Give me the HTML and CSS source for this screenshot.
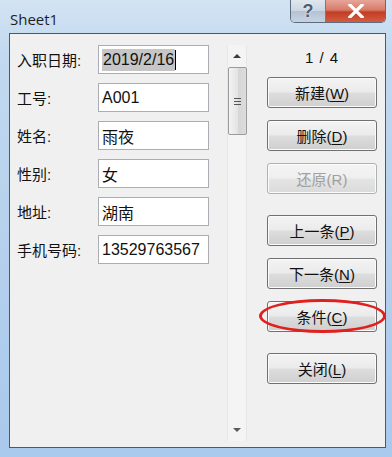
FILE: index.html
```html
<!DOCTYPE html>
<html lang="zh-CN">
<head>
    <meta charset="UTF-8">
    <title>Sheet1</title>
    <link rel="stylesheet" href="styles.css">
</head>
<body>
    <div class="window">
        <div class="titlebar">
            <div class="title">Sheet1</div>
            <div class="caption-btns">
                <div class="cap-btn cap-help">?</div>
                <div class="cap-btn cap-close">
                    <svg width="18" height="14" viewBox="0 0 18 14">
                        <path d="M3 1 L15 13 M15 1 L3 13" stroke="#fff" stroke-width="3.2" stroke-linecap="square"/>
                    </svg>
                </div>
            </div>
        </div>

        <div class="client">
            <div class="form">
                <div class="row">
                    <div class="label">入职日期:</div>
                    <div class="field"><span class="sel">2019/2/16</span><span class="caret"></span></div>
                </div>
                <div class="row">
                    <div class="label">工号:</div>
                    <div class="field">A001</div>
                </div>
                <div class="row">
                    <div class="label">姓名:</div>
                    <div class="field">雨夜</div>
                </div>
                <div class="row">
                    <div class="label">性别:</div>
                    <div class="field">女</div>
                </div>
                <div class="row">
                    <div class="label">地址:</div>
                    <div class="field">湖南</div>
                </div>
                <div class="row">
                    <div class="label">手机号码:</div>
                    <div class="field">13529763567</div>
                </div>
            </div>

            <div class="scrollbar">
                <div class="arrow arrow-up"></div>
                <div class="thumb">
                    <div class="grip"></div>
                </div>
                <div class="track"></div>
                <div class="arrow arrow-down"></div>
            </div>

            <div class="actions">
                <div class="counter">1 / 4</div>
                <div class="group">
                    <button class="btn">新建(<u>W</u>)</button>
                    <button class="btn">删除(<u>D</u>)</button>
                    <button class="btn btn-disabled">还原(R)</button>
                </div>
                <div class="group">
                    <button class="btn">上一条(<u>P</u>)</button>
                    <button class="btn">下一条(<u>N</u>)</button>
                    <button class="btn btn-marked">条件(<u>C</u>)</button>
                </div>
                <div class="group">
                    <button class="btn">关闭(<u>L</u>)</button>
                </div>
            </div>
        </div>
    </div>
</body>
</html>
```

FILE: styles.css
```css
* {
    margin: 0;
    padding: 0;
    box-sizing: border-box;
}

body {
    width: 392px;
    height: 457px;
    overflow: hidden;
    font-family: "Liberation Sans", "Noto Sans CJK SC", sans-serif;
    background: #b7d2ee;
}

.window {
    width: 392px;
    height: 457px;
    display: flex;
    flex-direction: column;
    padding: 0 6px 9px 9px;
    background: linear-gradient(180deg, #d3e3f2 0%, #c2d9f0 12%, #b3cfec 60%, #a9c9ec 100%);
}

/* title bar */
.titlebar {
    height: 33px;
    display: flex;
    align-items: flex-start;
    flex-shrink: 0;
}

.title {
    padding: 11px 0 0 1px;
    font-family: "Open Sans", "Liberation Sans", sans-serif;
    font-size: 15px;
    line-height: 16px;
    color: #1e1e1e;
}

.caption-btns {
    margin-left: auto;
    display: flex;
    height: 23px;
    border: 1px solid #5d6d80;
    border-top: none;
    border-radius: 0 0 5px 5px;
    overflow: hidden;
}

.cap-btn {
    height: 22px;
    display: flex;
    align-items: center;
    justify-content: center;
}

.cap-help {
    width: 35px;
    border-right: 1px solid #6e7c8c;
    background: linear-gradient(180deg, #dfe6ee 0%, #cbd6e2 50%, #b4c3d3 52%, #c5d3e1 100%);
    color: #4f5c6a;
    font-size: 18px;
    font-weight: bold;
    text-shadow: 0 0 2px #fff;
}

.cap-close {
    width: 59px;
    background: linear-gradient(180deg, #e6a598 0%, #d77b69 45%, #c33d26 55%, #d35c40 100%);
}

/* client area */
.client {
    flex: 1;
    display: flex;
    background: #f0f0f0;
    border: 1px solid #4e5966;
}

.form {
    width: 217px;
    padding: 11px 0 0 7px;
    display: flex;
    flex-direction: column;
    gap: 9px;
}

.row {
    display: flex;
    align-items: center;
}

.label {
    width: 81px;
    font-size: 15px;
    color: #111;
}

.field {
    width: 111px;
    height: 29px;
    background: #fff;
    border: 1px solid #abadb3;
    padding: 0 3px;
    display: flex;
    align-items: center;
    font-size: 16px;
    color: #111;
}

.sel {
    background: #c6c6c6;
    padding: 0 1px 0 1px;
    line-height: 22px;
}

.caret {
    width: 1px;
    height: 20px;
    background: #000;
}

/* scrollbar */
.scrollbar {
    width: 20px;
    margin: 11px 0 6px 0;
    display: flex;
    flex-direction: column;
    align-items: center;
    background: #f4f4f4;
    border-left: 1px solid #e6e6e6;
    border-right: 1px solid #e6e6e6;
}

.arrow {
    height: 22px;
    width: 100%;
    display: flex;
    align-items: center;
    justify-content: center;
}

.arrow::before {
    content: "";
    border-left: 4px solid transparent;
    border-right: 4px solid transparent;
}

.arrow-up::before {
    border-bottom: 4px solid #3c3c3c;
}

.arrow-down::before {
    border-top: 4px solid #5a5a5a;
}

.thumb {
    width: 19px;
    height: 68px;
    border: 1px solid #9b9b9b;
    border-radius: 2px;
    background: linear-gradient(90deg, #f3f3f3 0%, #e4e4e4 50%, #d6d6d6 52%, #dcdcdc 100%);
    display: flex;
    align-items: center;
    justify-content: center;
}

.grip {
    width: 7px;
    height: 7px;
    border-top: 1px solid #555;
    border-bottom: 1px solid #555;
    position: relative;
}

.grip::after {
    content: "";
    position: absolute;
    left: 0;
    right: 0;
    top: 2px;
    border-top: 1px solid #555;
}

.track {
    flex: 1;
}

/* buttons */
.actions {
    width: 110px;
    margin-left: 20px;
    display: flex;
    flex-direction: column;
    gap: 21px;
}

.counter {
    margin-top: 14px;
    margin-bottom: -12px;
    height: 20px;
    line-height: 20px;
    text-align: center;
    font-size: 15px;
    letter-spacing: 1px;
    color: #111;
}

.group {
    display: flex;
    flex-direction: column;
    gap: 12px;
}

.btn {
    width: 110px;
    height: 31px;
    border: 1px solid #707070;
    border-radius: 3px;
    background: linear-gradient(180deg, #f3f3f3 0%, #ebebeb 48%, #dddddd 52%, #cfcfcf 100%);
    box-shadow: inset 0 0 0 1px #fbfbfb;
    font-family: "Liberation Sans", "Noto Sans CJK SC", sans-serif;
    font-size: 15px;
    color: #111;
    position: relative;
}

.btn u {
    text-underline-offset: 2px;
}

.btn-disabled {
    color: #a0a0a0;
    border-color: #adb2b5;
    background: linear-gradient(180deg, #f4f4f4 0%, #efefef 48%, #e4e4e4 52%, #dadada 100%);
}

.btn-marked::after {
    content: "";
    position: absolute;
    left: -9px;
    right: -10px;
    top: -3px;
    bottom: -2px;
    border: 3px solid #e0201e;
    border-radius: 50%;
}
```
